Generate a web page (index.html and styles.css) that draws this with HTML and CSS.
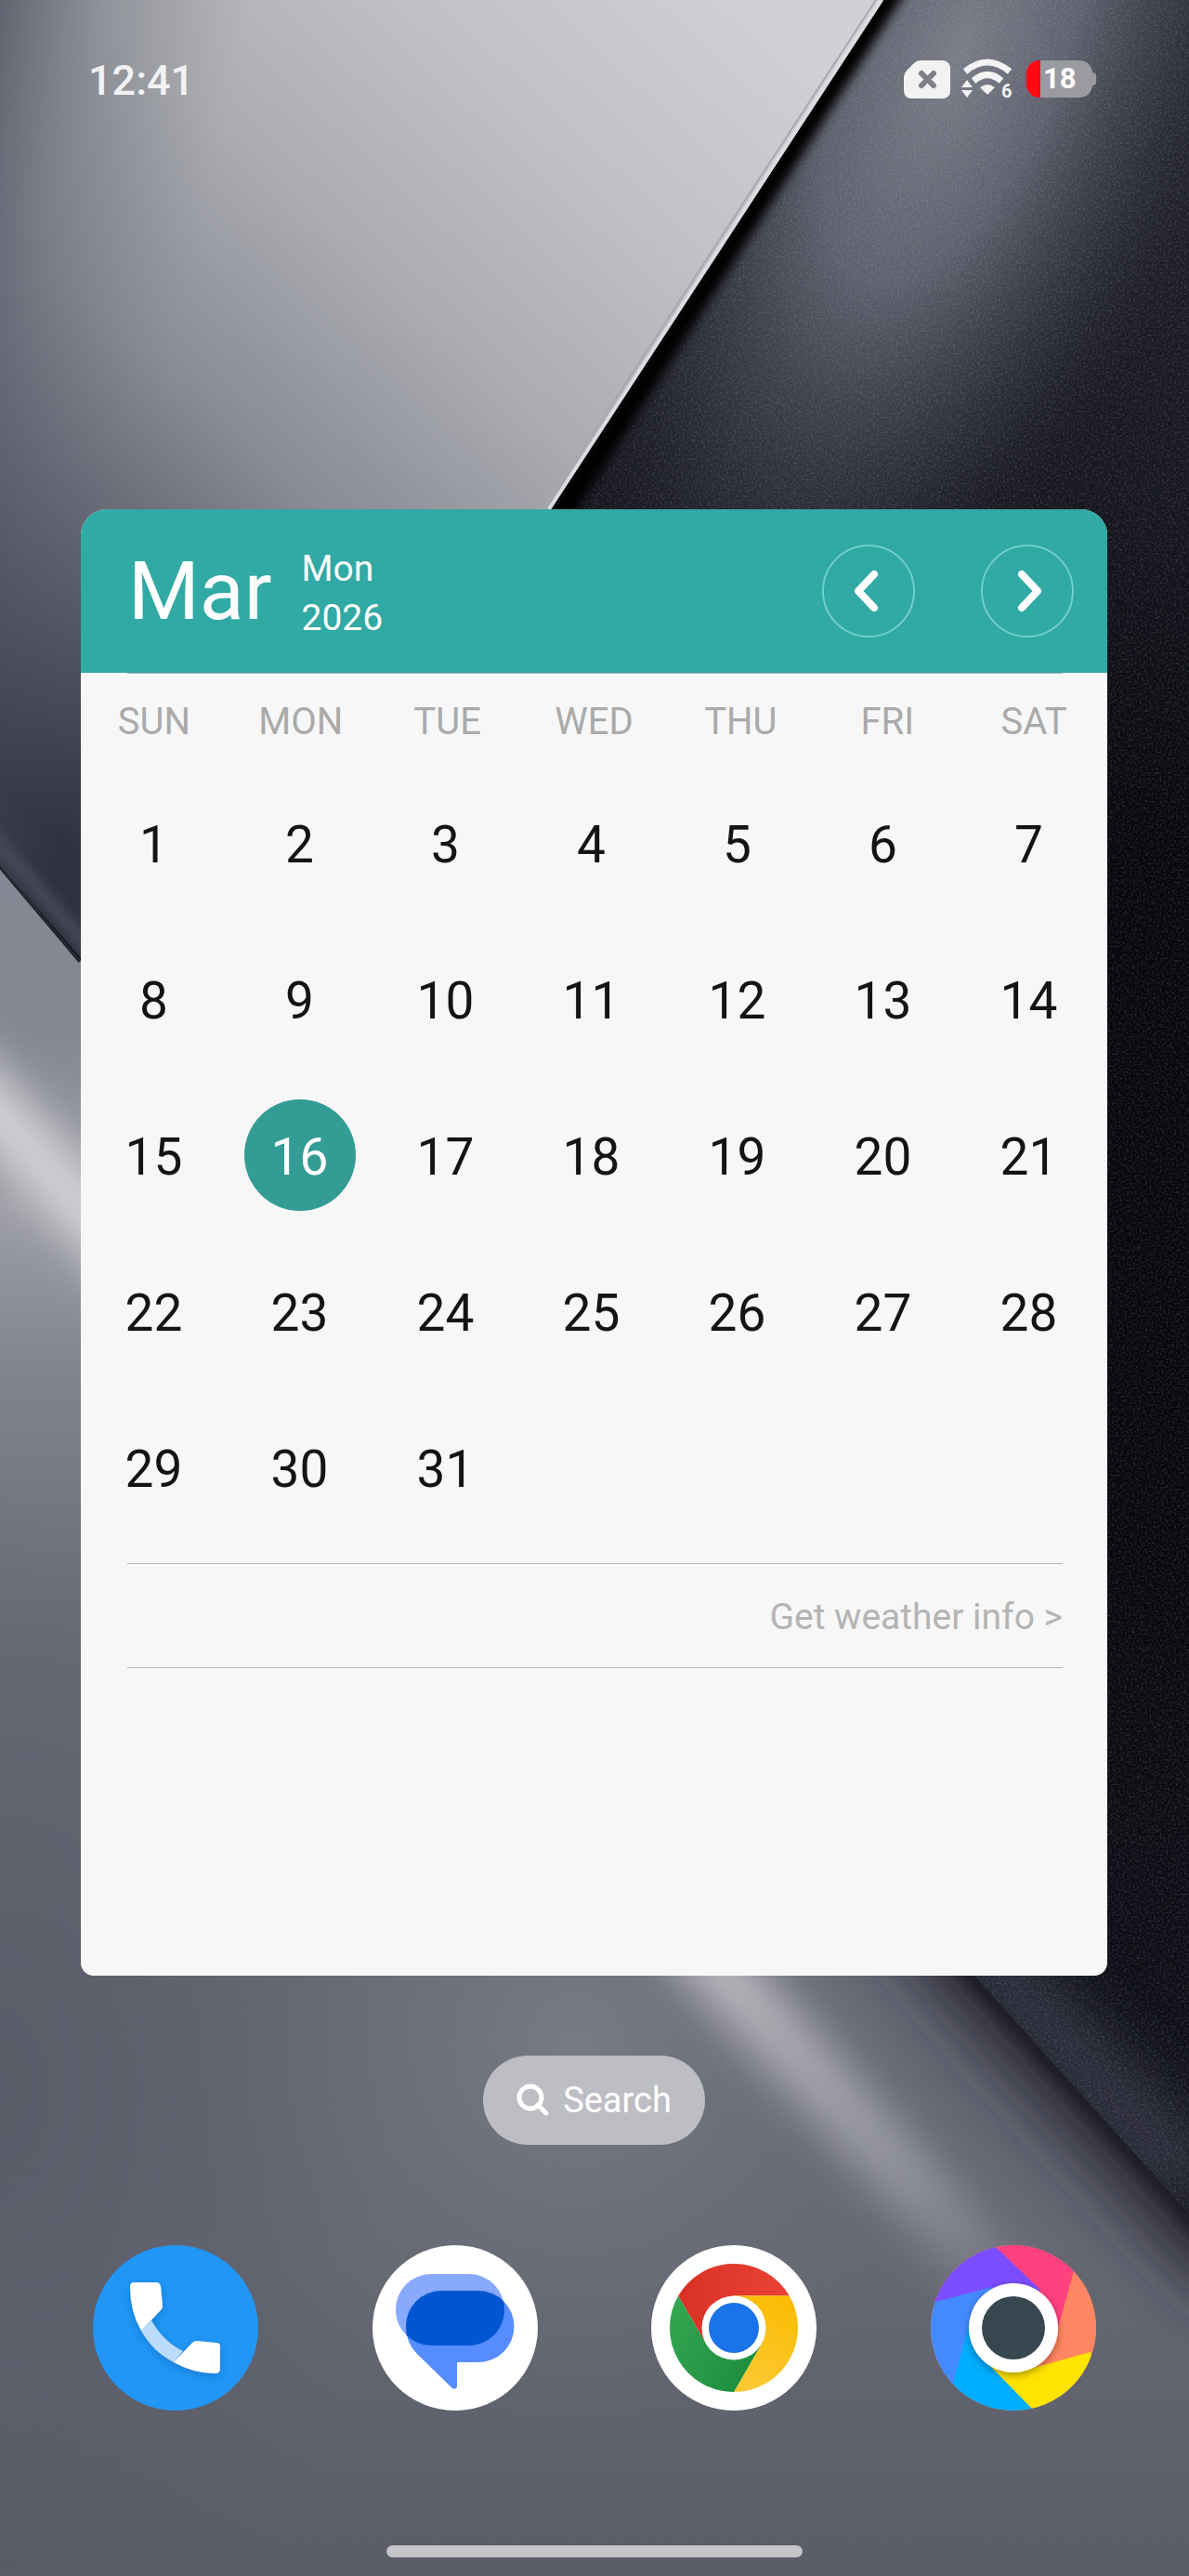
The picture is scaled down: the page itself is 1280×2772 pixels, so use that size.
FILE: index.html
```html
<!DOCTYPE html>
<html lang="en">
<head>
<meta charset="utf-8">
<meta name="viewport" content="width=device-width, initial-scale=1">
<title>Home screen</title>
<link rel="stylesheet" href="styles.css">
</head>
<body>
<div class="screen">
  <svg class="wallpaper" viewBox="0 0 1280 2772" preserveAspectRatio="none" aria-hidden="true">
    <defs>
      <linearGradient id="plate" gradientUnits="userSpaceOnUse" x1="820" y1="0" x2="20" y2="860">
        <stop offset="0" stop-color="#d0d0d6"/><stop offset=".22" stop-color="#c0c1c5"/><stop offset=".42" stop-color="#abacb1"/>
        <stop offset=".62" stop-color="#888a95"/><stop offset=".78" stop-color="#60626f"/><stop offset="1" stop-color="#30323f"/>
      </linearGradient>
      <linearGradient id="plateSide" gradientUnits="userSpaceOnUse" x1="0" y1="0" x2="260" y2="60">
        <stop offset="0" stop-color="#4c4f5d" stop-opacity=".75"/><stop offset=".4" stop-color="#5c5f6c" stop-opacity=".35"/><stop offset="1" stop-color="#777a86" stop-opacity="0"/>
      </linearGradient>
      <radialGradient id="sheen" gradientUnits="userSpaceOnUse" cx="0" cy="0" r="1" gradientTransform="translate(1030 60) rotate(22) scale(320 740)">
        <stop offset="0" stop-color="#7a7c88"/><stop offset=".35" stop-color="#626471" stop-opacity=".95"/><stop offset=".7" stop-color="#3a3c48" stop-opacity=".6"/><stop offset="1" stop-color="#20212b" stop-opacity="0"/>
      </radialGradient>
      <linearGradient id="dark" x1="0" y1="0" x2="0" y2="1">
        <stop offset="0" stop-color="#23242e"/><stop offset=".2" stop-color="#14151d"/><stop offset=".33" stop-color="#06070c"/><stop offset=".6" stop-color="#07080d"/><stop offset=".72" stop-color="#0c0d14"/><stop offset="1" stop-color="#14151d"/>
      </linearGradient>
      <linearGradient id="lower" gradientUnits="userSpaceOnUse" x1="0" y1="930" x2="0" y2="2772">
        <stop offset="0" stop-color="#858894"/><stop offset=".1" stop-color="#858792"/><stop offset=".2" stop-color="#9d9ea6"/><stop offset=".3" stop-color="#80838e"/><stop offset=".46" stop-color="#6a6c78"/>
        <stop offset=".65" stop-color="#666874"/><stop offset=".82" stop-color="#656773"/><stop offset="1" stop-color="#5a5c68"/>
      </linearGradient>
      <radialGradient id="lowerSide" gradientUnits="userSpaceOnUse" cx="0" cy="0" r="1" gradientTransform="translate(0 2250) scale(420 700)">
        <stop offset="0" stop-color="#50525f" stop-opacity=".55"/><stop offset="1" stop-color="#50525f" stop-opacity="0"/>
      </radialGradient>
      <radialGradient id="glow" gradientUnits="userSpaceOnUse" cx="620" cy="2200" r="420">
        <stop offset="0" stop-color="#80828e" stop-opacity=".7"/><stop offset="1" stop-color="#6c6e7a" stop-opacity="0"/>
      </radialGradient>
      <linearGradient id="beam" gradientUnits="userSpaceOnUse" x1="0" y1="1150" x2="0" y2="2540">
        <stop offset="0" stop-color="#d6d6da"/><stop offset=".7" stop-color="#bcbcc2"/><stop offset=".86" stop-color="#a0a1a8" stop-opacity=".8"/><stop offset="1" stop-color="#8d8f99" stop-opacity="0"/>
      </linearGradient>
      <filter id="soft" x="-20%" y="-20%" width="140%" height="140%"><feGaussianBlur stdDeviation="24"/></filter>
      <filter id="softEdge" x="-20%" y="-20%" width="140%" height="140%"><feGaussianBlur stdDeviation="34"/></filter>
      <filter id="thin" x="-20%" y="-20%" width="140%" height="140%"><feGaussianBlur stdDeviation="6"/></filter>
      <filter id="grain"><feTurbulence type="fractalNoise" baseFrequency=".45" numOctaves="2" seed="4"/><feColorMatrix values="0 0 0 0 .6  0 0 0 0 .62  0 0 0 0 .72  1.4 0 0 0 -.6"/></filter>
      <clipPath id="lowerClip"><path d="M0 931 87 1034 1049 2126 1280 2382V2772H0Z"/></clipPath>
      <clipPath id="darkClip"><path d="M951 0H1280V2382L1049 2126 300 1276 300 1000 593 548Z"/></clipPath>
    </defs>
    <rect width="1280" height="2772" fill="url(#dark)"/>
    <g clip-path="url(#darkClip)">
      <rect x="300" width="980" height="1100" fill="url(#sheen)"/>
      <path d="M1000 2040 1290 2360" stroke="#444658" stroke-width="70" opacity=".75" filter="url(#softEdge)"/>
      <rect width="1280" height="2772" filter="url(#grain)" opacity=".3"/>
      <path d="M968-20 599 560" stroke="#000" stroke-width="24" filter="url(#thin)"/>
    </g>
    <path d="M0 0H951L593 548 300 1000V1276L0 931Z" fill="url(#plate)"/>
    <path d="M0 0H951L593 548 300 1000V1276L0 931Z" fill="url(#plateSide)"/>
    <path d="M949 0 591 548" stroke="#dcdce1" stroke-width="4"/>
    <path d="M943 0 585 548" stroke="#a8a8ae" stroke-width="2"/>
    <path d="M-20 885 100 1026" stroke="#474959" stroke-width="14" filter="url(#thin)"/>
    <g clip-path="url(#lowerClip)">
      <rect y="900" width="1280" height="1872" fill="url(#lower)"/>
      <rect y="1500" width="1280" height="1272" fill="url(#lowerSide)"/>
      <rect y="1700" width="1280" height="1072" fill="url(#glow)"/>
      <path d="M520 1430 1100 2126 1370 2425" fill="none" stroke="#262833" stroke-width="160" filter="url(#softEdge)"/>
      <path d="M1020 2086 1320 2420" fill="none" stroke="#1b1c25" stroke-width="30" filter="url(#thin)"/>
      <path d="M-60 1140 87 1295 780 2126 990 2360 1110 2500" fill="none" stroke="url(#beam)" stroke-width="64" filter="url(#soft)"/>
      <path d="M0 931 87 1034" stroke="#23242e" stroke-width="6"/>
    </g>
  </svg>

  <header class="status">
    <time class="clock">12:41</time>
    <div class="status-icons">
      <svg width="50" height="41" viewBox="0 0 50 41" role="img" aria-label="No SIM"><path fill="#f2f2f3" d="M17 0H41Q50 0 50 9V32Q50 41 41 41H9Q0 41 0 32V18Q0 14 3 11L11 3Q14 0 17 0Z"/><path d="M19 14 32 27M32 14 19 27" stroke="#7e7f89" stroke-width="6" stroke-linecap="round"/></svg>
      <svg width="58" height="48" viewBox="0 -2 58 48" role="img" aria-label="Wi-Fi 6"><g fill="none" stroke="#f2f2f3" stroke-width="7"><path d="M4 14Q28-6 52 14"/><path d="M13 24Q28 11 43 24"/></g><path fill="#f2f2f3" d="M20 31Q28 25 36 31L29 38Q28 39 27 38ZM0 31 6 23 12 31ZM0 34H12L6 42Z"/><text class="wifi-gen" x="43" y="42">6</text></svg>
      <div class="battery" role="img" aria-label="Battery 18 percent"><span class="battery-level">18</span></div>
    </div>
  </header>

  <main class="calendar">
    <header class="cal-head">
      <h1 class="month">Mar</h1>
      <p class="sub">Mon<br>2026</p>
      <div class="nav">
        <button class="nav-btn" type="button" aria-label="Previous month"><svg width="32" height="46" viewBox="0 0 32 46"><path d="M22 5 5 23 22 41"/></svg></button>
        <button class="nav-btn" type="button" aria-label="Next month"><svg width="32" height="46" viewBox="0 0 32 46"><path d="M10 5 27 23 10 41"/></svg></button>
      </div>
    </header>
    <hr class="rule">
    <table class="days">
      <thead><tr><th>SUN</th><th>MON</th><th>TUE</th><th>WED</th><th>THU</th><th>FRI</th><th>SAT</th></tr></thead>
      <tbody>
        <tr><td>1</td><td>2</td><td>3</td><td>4</td><td>5</td><td>6</td><td>7</td></tr>
        <tr><td>8</td><td>9</td><td>10</td><td>11</td><td>12</td><td>13</td><td>14</td></tr>
        <tr><td>15</td><td><span class="today">16</span></td><td>17</td><td>18</td><td>19</td><td>20</td><td>21</td></tr>
        <tr><td>22</td><td>23</td><td>24</td><td>25</td><td>26</td><td>27</td><td>28</td></tr>
        <tr><td>29</td><td>30</td><td>31</td><td></td><td></td><td></td><td></td></tr>
      </tbody>
    </table>
    <div class="weather"><a href="#weather">Get weather info &gt;</a></div>
  </main>

  <button class="search" type="button">
    <svg width="36" height="36" viewBox="0 0 36 36" aria-hidden="true"><circle cx="15" cy="15" r="12"/><path d="M23 23 32 32"/></svg>
    Search
  </button>

  <nav class="dock">
    <a href="#phone" aria-label="Phone"><svg viewBox="0 0 178 178">
      <defs><filter id="phoneShadow" x="-20%" y="-20%" width="140%" height="140%"><feDropShadow dx="0" dy="3" stdDeviation="5" flood-color="#0d5fae" flood-opacity=".5"/></filter></defs>
      <circle cx="89" cy="89" r="89" fill="#2196f6"/>
      <g filter="url(#phoneShadow)"><path fill="#bbdcfb" d="M52 92 63 81Q76 104 97 114L87 126Q64 114 52 92Z"/>
      <path fill="#fff" d="M44 40H68Q72 40 73 44L75 65Q75 68 73 70L52 92Q40 71 40 45Q40 40 44 40Z"/>
      <path fill="#fff" d="M87 126 107 105Q109 103 112 103L133 105Q137 105 137 109V133Q137 138 132 138Q108 138 87 126Z"/></g>
    </svg></a>
    <a href="#messages" aria-label="Messages"><svg viewBox="0 0 178 178">
      <defs><clipPath id="bubble"><rect x="25" y="31" width="117" height="77" rx="38"/></clipPath></defs>
      <circle cx="89" cy="89" r="89" fill="#fff"/>
      <rect x="25" y="31" width="117" height="77" rx="38" fill="#88a9fc"/><path fill="#88a9fc" d="M30 85 42 101 60 106 60 80Z"/>
      <path fill="#578cff" d="M74 49H114A38 38 0 0 1 114 126H91V151Q91 156 86 154L48 117Q36 105 36 87A38 38 0 0 1 74 49Z"/>
      <path clip-path="url(#bubble)" fill="#0056d0" d="M74 49H114A38 38 0 0 1 114 126H91L48 117Q36 105 36 87A38 38 0 0 1 74 49Z"/>
    </svg></a>
    <a href="#chrome" aria-label="Chrome"><svg viewBox="0 0 178 178">
      <defs>
        <linearGradient id="cr" x1="0" x2="1"><stop offset="0" stop-color="#d93025"/><stop offset="1" stop-color="#ea4335"/></linearGradient>
        <linearGradient id="cg" x1="1" y1=".6" x2="0" y2="0"><stop offset="0" stop-color="#1e8e3e"/><stop offset="1" stop-color="#34a853"/></linearGradient>
        <linearGradient id="cy" x1=".3" y1="1" x2=".6" y2="0"><stop offset="0" stop-color="#fcc934"/><stop offset="1" stop-color="#fbbc04"/></linearGradient>
      </defs>
      <circle cx="89" cy="89" r="89" fill="#fff"/>
      <path fill="url(#cr)" d="M29.200 54.500A69 69 0 0 1 148.800 54.500H89L59.100 106.200Z"/>
      <path fill="url(#cy)" d="M148.800 54.500A69 69 0 0 1 89 158L118.900 106.200 89 54.500Z"/>
      <path fill="url(#cg)" d="M89 158A69 69 0 0 1 29.200 54.500L59.100 106.200 118.900 106.200Z"/>
      <circle cx="89" cy="89" r="34.500" fill="#fff"/><circle cx="89" cy="89" r="27" fill="#1a73e8"/>
    </svg></a>
    <a href="#gallery" aria-label="Gallery"><svg viewBox="0 0 178 178">
      <defs><clipPath id="disc"><circle cx="89" cy="89" r="89"/></clipPath>
      <filter id="ring" x="-20%" y="-20%" width="140%" height="140%"><feDropShadow dx="0" dy="3" stdDeviation="4" flood-opacity=".35"/></filter></defs>
      <g clip-path="url(#disc)">
        <rect width="178" height="178" fill="#ff8662"/>
        <path fill="#ff417f" d="M89 89 70 0 178-20 154 28 137 90Z"/>
        <path fill="#7c4dff" d="M89 89 5 61-20 0H66L71 3 118 48Z"/>
        <path fill="#448aff" d="M89 89 24 149-20 150V68L5 61 66 45Z"/>
        <path fill="#00aeff" d="M89 89 109 176 100 200H0L24 149 41 86Z"/>
        <path fill="#ffe400" d="M89 89 172 115 200 190H120L109 176 60 126Z"/>
        <path fill="#ff8662" d="M89 89 137 90 154 28 200 40 190 111 172 115 107 133Z"/>
      </g>
      <circle cx="89" cy="89" r="48" fill="#fff" filter="url(#ring)"/><circle cx="89" cy="89" r="34" fill="#37474f"/>
    </svg></a>
  </nav>
  <div class="home-bar"></div>
</div>
</body>
</html>
```
FILE: styles.css
```css
* { box-sizing: border-box; }

body {
  margin: 0;
  font-family: Roboto, "Liberation Sans", sans-serif;
  background: #14151d;
}

.screen {
  position: relative;
  display: flex;
  flex-direction: column;
  min-height: 100vh;
  padding: 60px 88px 20px 87px;
  overflow: hidden;
}

.wallpaper {
  position: absolute;
  inset: 0;
  width: 100%;
  height: 100%;
  z-index: -1;
}

.status {
  display: flex;
  justify-content: space-between;
  align-items: center;
  height: 50px;
  padding: 0 16px 0 8px;
  color: #f2f2f3;
}

.clock { font-size: 45px; line-height: 50px; font-weight: 500; padding-top: 4px; }

.status-icons { display: flex; align-items: center; gap: 12px; }

.wifi-gen { font-size: 20px; font-weight: 700; fill: #f2f2f3; }

.battery {
  position: relative;
  width: 71px;
  height: 40px;
  border-radius: 14px;
  background: linear-gradient(90deg, #ff0a14 15px, #9a9ba1 15px);
}

.battery::after {
  content: "";
  position: absolute;
  right: -4px;
  top: 13px;
  width: 4px;
  height: 14px;
  border-radius: 0 4px 4px 0;
  background: #9a9ba1;
}

.battery-level {
  display: block;
  padding-left: 18px;
  font-size: 31px;
  line-height: 40px;
  font-weight: 700;
  color: #fff;
}

.calendar {
  margin-top: 438px;
  padding-bottom: 331px;
  border-radius: 28px 28px 14px 14px;
  background: #f7f7f7;
  overflow: hidden;
}

.cal-head {
  display: flex;
  align-items: center;
  height: 176px;
  padding: 0 36px 0 51px;
  background: #31a9a4;
  color: #fff;
}

.month { margin: 0; font-size: 88px; line-height: 104px; font-weight: 400; }

.sub { margin: 5px 0 0 32px; font-size: 39px; line-height: 53px; }

.nav { display: flex; gap: 71px; margin-left: auto; }

.nav-btn {
  display: grid;
  place-items: center;
  width: 100px;
  height: 100px;
  padding: 0;
  border: 2px solid #72cfca;
  border-radius: 50%;
  background: none;
}

.nav-btn path {
  fill: none;
  stroke: #fff;
  stroke-width: 8;
  stroke-linecap: round;
  stroke-linejoin: round;
}

.rule {
  height: 1px;
  margin: 0 48px 0 50px;
  border: 0;
  background: #a6b4b3;
}

.days, .days thead, .days tbody { display: block; }

.days tr {
  display: grid;
  grid-template-columns: repeat(7, 1fr);
  text-align: center;
}

.days tbody tr { padding-right: 6px; }

.days th {
  padding: 0;
  font-size: 40px;
  line-height: 104px;
  font-weight: 400;
  color: #aaa;
}

.days td {
  height: 168px;
  padding: 18px 0 0;
  font-size: 55px;
  line-height: 124px;
  color: #141414;
}

.today {
  display: block;
  width: 120px;
  height: 120px;
  margin: 0 auto;
  border-radius: 50%;
  background: #339c95;
  color: #fff;
}

.weather {
  margin: 13px 48px 0 50px;
  padding: 33px 0 30px;
  border: solid #b8b8b8;
  border-width: 1px 0;
  text-align: right;
  font-size: 39px;
  line-height: 48px;
}

.weather a { color: #b4b4b4; text-decoration: none; }

.search {
  display: flex;
  align-items: center;
  justify-content: center;
  gap: 14px;
  align-self: center;
  width: 239px;
  height: 96px;
  margin-top: 86px;
  padding: 0;
  border: 0;
  border-radius: 48px;
  background: #bdbec4;
  color: #fff;
  font: 400 38px/48px Roboto, "Liberation Sans", sans-serif;
}

.search svg { fill: none; stroke: #fff; stroke-width: 5; stroke-linecap: round; }

.dock {
  display: flex;
  justify-content: space-between;
  margin-top: 108px;
  padding: 0 12px 0 13px;
}

.dock a, .dock svg { display: block; width: 178px; height: 178px; }

.home-bar {
  align-self: center;
  width: 448px;
  height: 13px;
  margin-top: auto;
  border-radius: 7px;
  background: #c5c5ca;
}
```
